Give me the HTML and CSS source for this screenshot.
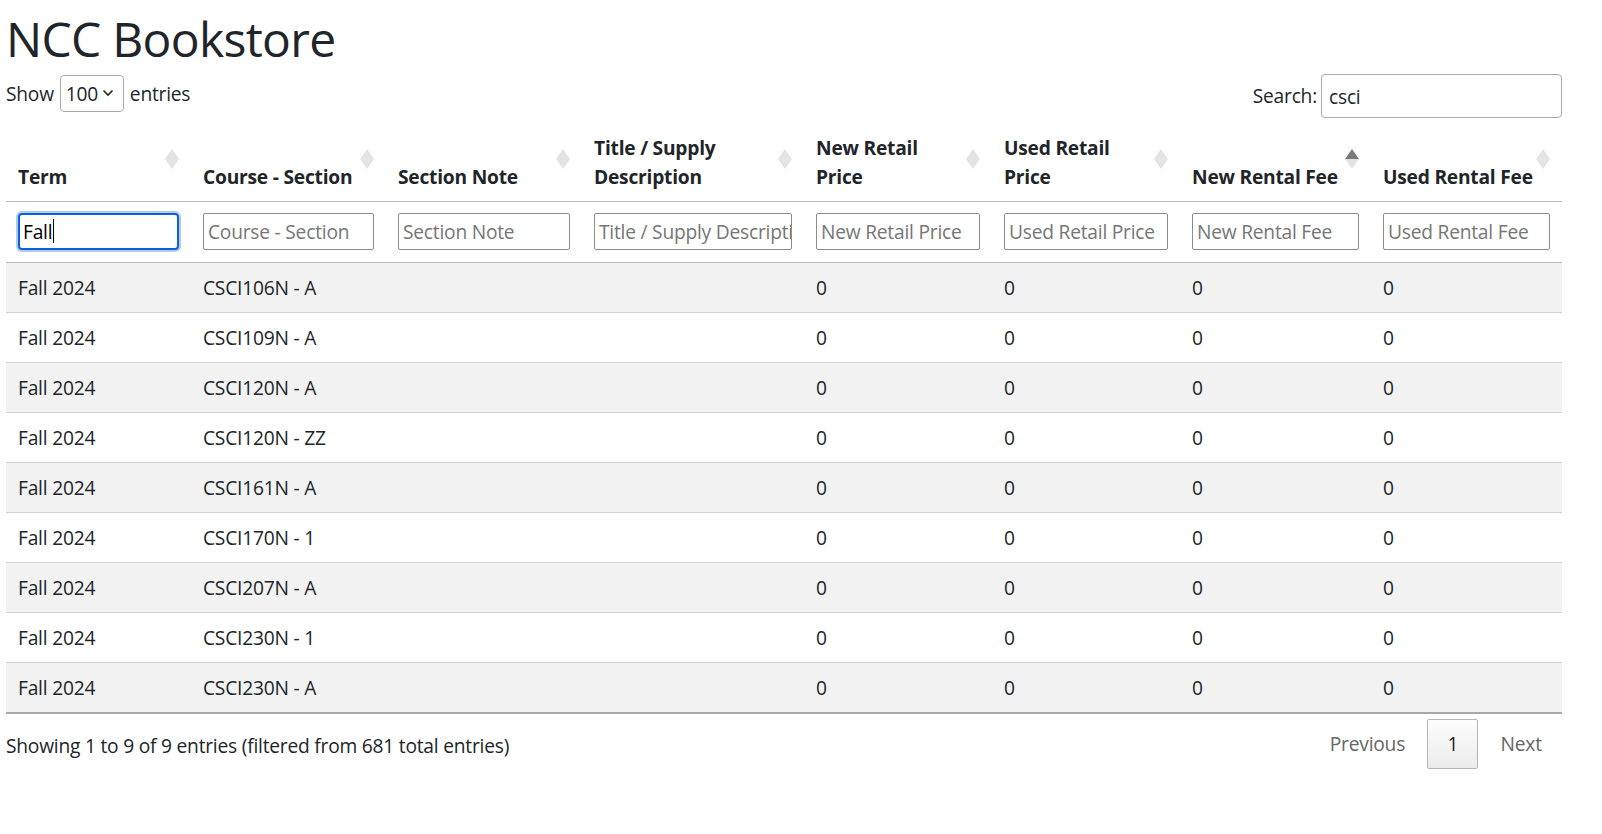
FILE: index.html
```html
<!DOCTYPE html>
<html lang="en">
<head>
<meta charset="utf-8">
<title>NCC Bookstore</title>
<link rel="stylesheet" href="styles.css">
</head>
<body>
<div class="page">
  <h1 class="title">NCC Bookstore</h1>

  <div class="controls">
    <div class="length">
      <span>Show</span>
      <div class="select">
        <span>100</span>
        <svg width="12" height="8" viewBox="0 0 12 8"><path d="M1.5 1.5l4.5 4.5 4.5-4.5" fill="none" stroke="#222" stroke-width="1.6"/></svg>
      </div>
      <span>entries</span>
    </div>
    <div class="search">
      <span>Search:</span>
      <div class="search-input">csci</div>
    </div>
  </div>

  <table class="grid">
    <colgroup>
      <col class="c1"><col class="c2"><col class="c3"><col class="c4">
      <col class="c5"><col class="c6"><col class="c7"><col class="c8">
    </colgroup>
    <thead>
      <tr class="head">
        <th>Term<span class="order"><i class="up"></i><i class="down"></i></span></th>
        <th>Course - Section<span class="order"><i class="up"></i><i class="down"></i></span></th>
        <th>Section Note<span class="order"><i class="up"></i><i class="down"></i></span></th>
        <th>Title / Supply<br>Description<span class="order"><i class="up"></i><i class="down"></i></span></th>
        <th>New Retail<br>Price<span class="order"><i class="up"></i><i class="down"></i></span></th>
        <th>Used Retail<br>Price<span class="order"><i class="up"></i><i class="down"></i></span></th>
        <th>New Rental Fee<span class="order asc"><i class="up"></i><i class="down"></i></span></th>
        <th>Used Rental Fee<span class="order"><i class="up"></i><i class="down"></i></span></th>
      </tr>
      <tr class="filters">
        <td><div class="finput focus">Fall<span class="caret"></span></div></td>
        <td><div class="finput ph">Course - Section</div></td>
        <td><div class="finput ph">Section Note</div></td>
        <td><div class="finput ph">Title / Supply Description</div></td>
        <td><div class="finput ph">New Retail Price</div></td>
        <td><div class="finput ph">Used Retail Price</div></td>
        <td><div class="finput ph">New Rental Fee</div></td>
        <td><div class="finput ph">Used Rental Fee</div></td>
      </tr>
    </thead>
    <tbody>
      <tr><td>Fall 2024</td><td>CSCI106N - A</td><td></td><td></td><td>0</td><td>0</td><td>0</td><td>0</td></tr>
      <tr><td>Fall 2024</td><td>CSCI109N - A</td><td></td><td></td><td>0</td><td>0</td><td>0</td><td>0</td></tr>
      <tr><td>Fall 2024</td><td>CSCI120N - A</td><td></td><td></td><td>0</td><td>0</td><td>0</td><td>0</td></tr>
      <tr><td>Fall 2024</td><td>CSCI120N - ZZ</td><td></td><td></td><td>0</td><td>0</td><td>0</td><td>0</td></tr>
      <tr><td>Fall 2024</td><td>CSCI161N - A</td><td></td><td></td><td>0</td><td>0</td><td>0</td><td>0</td></tr>
      <tr><td>Fall 2024</td><td>CSCI170N - 1</td><td></td><td></td><td>0</td><td>0</td><td>0</td><td>0</td></tr>
      <tr><td>Fall 2024</td><td>CSCI207N - A</td><td></td><td></td><td>0</td><td>0</td><td>0</td><td>0</td></tr>
      <tr><td>Fall 2024</td><td>CSCI230N - 1</td><td></td><td></td><td>0</td><td>0</td><td>0</td><td>0</td></tr>
      <tr><td>Fall 2024</td><td>CSCI230N - A</td><td></td><td></td><td>0</td><td>0</td><td>0</td><td>0</td></tr>
    </tbody>
  </table>

  <div class="footer">
    <div class="info">Showing 1 to 9 of 9 entries (filtered from 681 total entries)</div>
    <div class="paging">
      <span class="pbtn disabled">Previous</span>
      <span class="pbtn current">1</span>
      <span class="pbtn disabled">Next</span>
    </div>
  </div>
</div>
</body>
</html>
```

FILE: styles.css
```css
* { box-sizing: border-box; }

html, body {
  margin: 0;
  padding: 0;
  background: #fff;
}

body {
  font-family: "Open Sans", "Noto Sans", sans-serif;
  font-size: 19.2px;
  line-height: 29px;
  letter-spacing: -0.22px;
  color: #212529;
}

.page {
  width: 1556px;
  margin-left: 6px;
  padding-top: 10px;
}

.title {
  margin: 0 0 6px 0;
  font-size: 48px;
  font-weight: 400;
  line-height: 57.6px;
  letter-spacing: -0.7px;
}

.controls {
  display: flex;
  justify-content: space-between;
  align-items: flex-start;
  height: 44px;
}

.length {
  display: flex;
  align-items: center;
  gap: 6px;
  padding-top: 1px;
}

.select {
  width: 64px;
  height: 37px;
  border: 1px solid #aaa;
  border-radius: 4px;
  display: flex;
  align-items: center;
  justify-content: space-between;
  padding: 0 9px 0 5px;
}

.search {
  display: flex;
  align-items: center;
  gap: 4px;
  height: 44px;
}

.search-input {
  width: 241px;
  height: 44px;
  border: 1px solid #aaa;
  border-radius: 4px;
  padding: 7px 7px;
  line-height: 29px;
}

.grid {
  width: 1556px;
  table-layout: fixed;
  border-collapse: collapse;
  border-spacing: 0;
  margin-top: 7px;
  border-bottom: 2px solid #a9a9a9;
}

.c1 { width: 185px; }
.c2 { width: 195px; }
.c3 { width: 196px; }
.c4 { width: 222px; }
.c5 { width: 188px; }
.c6 { width: 188px; }
.c7 { width: 191px; }
.c8 { width: 191px; }

.head th {
  position: relative;
  text-align: left;
  vertical-align: bottom;
  font-weight: 700;
  white-space: nowrap;
  padding: 8px 30px 10px 12px;
  border-bottom: 1px solid #b9b9b9;
}

.order {
  position: absolute;
  right: 12px;
  top: 24px;
  width: 14px;
  height: 21px;
  display: flex;
  flex-direction: column;
  justify-content: center;
}

.order i {
  display: block;
  width: 0;
  height: 0;
  border-left: 7px solid transparent;
  border-right: 7px solid transparent;
}

.order .up { border-bottom: 10.5px solid #e2e3e4; }
.order .down { border-top: 10.5px solid #e2e3e4; }
.order.asc .up { border-bottom-color: #7a7a7a; }

.filters td {
  padding: 11px 12px 12px 12px;
  border-bottom: 1px solid #b9b9b9;
}

.finput {
  height: 37px;
  border: 1px solid #8d8d8d;
  border-radius: 2px;
  padding: 3px 4px;
  line-height: 29px;
  white-space: nowrap;
  overflow: hidden;
}

.finput.ph { color: #767676; }

.finput.focus {
  border: 2px solid #0b62d6;
  border-radius: 4px;
  box-shadow: 0 0 0 2px #b3c9ee;
  padding: 2px 3px;
  color: #000;
  display: flex;
  align-items: center;
}

.caret {
  display: inline-block;
  width: 1px;
  height: 24px;
  background: #000;
  margin-left: 1px;
}

tbody td {
  padding: 10px 12px;
  line-height: 29px;
  border-top: 1px solid #d2d2d2;
  white-space: nowrap;
}

tbody tr:first-child td { border-top: none; }

tbody tr:nth-child(odd) td { background: #f2f2f2; }

.footer {
  display: flex;
  justify-content: space-between;
  align-items: center;
  margin-top: 5px;
}

.info {
  padding-top: 3px;
}

.paging {
  display: flex;
  align-items: center;
}

.pbtn {
  display: inline-block;
  padding: 9.6px 19.2px;
  border: 1px solid transparent;
  border-radius: 2px;
  margin-left: 2px;
  line-height: 29px;
}

.pbtn.disabled { color: #666; }

.pbtn.current {
  border-color: #b5b5b5;
  background: linear-gradient(to bottom, #fdfdfd 0%, #ececec 100%);
  color: #212529;
}
```
